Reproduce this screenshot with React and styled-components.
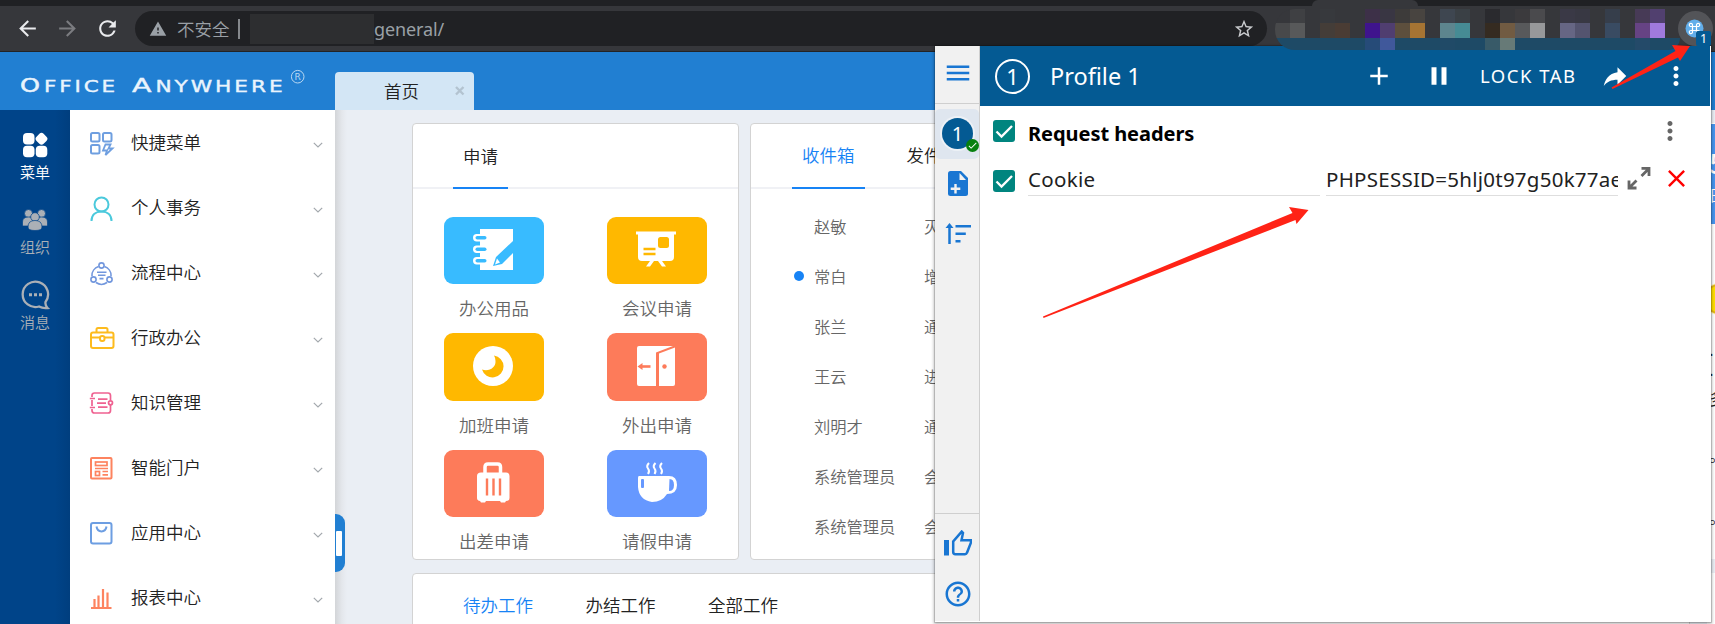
import React from "react";
import styled, { createGlobalStyle } from "styled-components";
import {
  MdArrowBack, MdArrowForward, MdRefresh, MdWarning, MdStarBorder, MdAdd, MdPause,
  MdMoreVert, MdHelpOutline, MdMenu, MdClose, MdCheck,
} from "react-icons/md";

const Global = createGlobalStyle`
  * { box-sizing: border-box; }
  body {
    margin: 0; overflow: hidden; background: #eaeef4;
    font-family: "Noto Sans", "Noto Sans CJK SC", sans-serif;
  }
  svg { display: block; flex: none; }
`;

const CJK = `"Noto Sans CJK SC", "Noto Sans", sans-serif`;

const Screen = styled.div`
  position: relative; width: 1715px; height: 624px; overflow: hidden;
  display: flex; flex-direction: column;
`;

/* ---------- browser chrome ---------- */
const TabStrip = styled.div`
  height: 6px; background: #202124; padding-left: 1312px; flex: none;
`;
const ActiveTab = styled.div`
  width: 106px; height: 6px; background: #36373b; border-radius: 7px 7px 0 0;
`;
const Toolbar = styled.div`
  height: 46px; flex: none; background: #36373b; border-bottom: 1px solid #222326;
  display: flex; align-items: center; padding-left: 15px;
`;
const NavButton = styled.div`
  width: 25px; height: 25px; margin-right: 15px; font-size: 25px; color: ${(p) => p.$color};
`;
const UrlBar = styled.div`
  width: 1132px; height: 35px; border-radius: 18px; background: #202124; color: #9aa0a6;
  display: flex; align-items: center; padding: 0 12px 0 14px; font-size: 17.5px; line-height: 24px;
  font-family: ${CJK}; font-weight: 350; overflow: hidden;
`;
const UrlNote = styled.span`margin-left: 10px; width: 54px; white-space: nowrap;`;
const UrlDivider = styled.span`width: 2px; height: 20px; background: #85888c; margin: 0 10px 0 7px;`;
const UrlMask = styled.span`width: 124px; height: 30px; background: #2d2e30;`;
const UrlPath = styled.span`
  font-family: "Noto Sans", sans-serif; font-size: 18px; letter-spacing: -0.1px; flex: 1; font-weight: 400;
`;
const Mosaic = styled.div`
  display: grid; grid-template-columns: repeat(27, 15px); grid-template-rows: 14px 15px 12px;
  border-radius: 20px 0 12px 20px; overflow: hidden;
  position: absolute; left: 1275px; top: 9px; z-index: 4;
`;
const Pixel = styled.i`background: ${(p) => p.$c};`;
const ExtensionButton = styled.div`
  position: absolute; left: 1678px; top: 11px; width: 35px; height: 35px; border-radius: 50%;
  background: #535458; z-index: 4; display: flex; align-items: center; justify-content: center;
  padding-right: 2px;
`;
const ExtensionBadge = styled.div`
  position: absolute; left: 18px; top: 20px; width: 15px; height: 15px; border-radius: 2px;
  background: #045a93; color: #fff; font-size: 12.5px; line-height: 15px; text-align: center;
`;

/* ---------- application header ---------- */
const AppHeader = styled.div`
  height: 58px; flex: none; background: #217fd2; display: flex; align-items: flex-end;
`;
const Brand = styled.div`width: 335px; height: 58px;`;
const PageTab = styled.div`
  width: 139px; height: 38px; background: #d3e6f5; border-radius: 4px 4px 0 0;
  display: flex; align-items: center; padding: 0 8px 0 49px; justify-content: space-between;
  font: 350 17.5px/24px ${CJK}; color: #222;
`;

const Body = styled.div`flex: 1; display: flex; min-height: 0;`;
const Rail = styled.div`
  width: 70px; padding-top: 18px;
  background: linear-gradient(90deg, #004489 0 55px, #003e7e 100%);
`;
const RailItem = styled.div`
  height: 75px; display: flex; flex-direction: column; align-items: center;
  color: ${(p) => (p.$active ? "#fff" : "#abb0b6")}; font: 350 15px/20px ${CJK};
`;
const RailIcon = styled.div`
  height: 34px; width: 72px; display: flex; align-items: center; justify-content: center;
`;

const Menu = styled.div`width: 265px; background: #fff; height: 514px; overflow: hidden;`;
const MenuRow = styled.div`
  height: 65px; display: flex; align-items: center; padding: 0 12px 1px 19px;
  font: 350 17.5px/26px ${CJK}; color: #222;
`;
const MenuIcon = styled.div`width: 26px; height: 26px; margin-top: 3px;`;
const MenuLabel = styled.span`margin-left: 16px; flex: 1;`;
const ChevronBox = styled.div`margin-top: 5px;`;

const Main = styled.div`
  flex: 1; min-width: 0; display: flex; padding: 13px 0 0 0;
  background: linear-gradient(90deg, #d3d5d8 0, #e4e7ec 7px, #eaeef4 12px);
`;
const DrawerHandle = styled.div`
  width: 10px; height: 58px; margin: 391px 67px 0 0; border-radius: 0 9px 9px 0; background: #217fd2;
  display: flex; align-items: center; padding-left: 1px;
  &::after { content: ""; width: 5.5px; height: 25px; border-radius: 1px; background: #fff; }
`;
const Board = styled.div`flex: 1; min-width: 0; display: flex; flex-direction: column; gap: 13px;`;
const BoardRow = styled.div`display: flex; gap: 11px;`;
const Card = styled.div`
  background: #fff; border: 1px solid #d3d3d3; border-radius: 4px; overflow: hidden;
  width: ${(p) => p.$w}px; height: ${(p) => p.$h}px; flex: none;
`;
const Tabs = styled.div`
  height: 65px; display: flex; padding-left: ${(p) => p.$left}px; border-bottom: 2px solid #f0f1f5;
  gap: ${(p) => p.$gap}px;
`;
const Tab = styled.div`
  height: 65px; padding: ${(p) => p.$top || 18}px 10px 0; white-space: nowrap;
  border-bottom: 2px solid ${(p) => (p.$line ? "#1783f5" : "transparent")};
  color: ${(p) => (p.$blue ? "#1783f5" : "#222")}; font: 350 17.5px/26px ${CJK};
`;
const Tiles = styled.div`
  display: grid; grid-template-columns: 100px 100px; column-gap: 63px; grid-auto-rows: 116.5px;
  padding: 27.5px 0 0 31px;
`;
const Tile = styled.div`
  display: flex; flex-direction: column; align-items: center; color: #666; font: 350 17.5px/26px ${CJK};
`;
const TileFace = styled.div`
  width: 100px; height: 67.5px; border-radius: 9px; margin-bottom: 11px; background: ${(p) => p.$c};
  display: flex; align-items: center; justify-content: center;
`;
const Mails = styled.div`padding: 12px 0 0 43px;`;
const MailRow = styled.div`
  height: 50.1px; display: flex; align-items: center; font: 350 16.25px/24px ${CJK}; color: #666; white-space: nowrap;
`;
const Unread = styled.i`
  width: 10px; height: 10px; border-radius: 50%; margin-right: 10px;
  background: ${(p) => (p.$on ? "#1783f5" : "transparent")};
`;
const MailFrom = styled.span`width: 110px; margin-top: -1px;`;
const MailSubject = styled.span`margin-top: -1px;`;

const SideColumn = styled.div`
  width: 8px; background: linear-gradient(#fff 0 436px, #eaeef4 436px 450px, #fff 450px);
  overflow: hidden; color: #222; font: 350 17px/20px ${CJK}; white-space: nowrap; flex: none;
`;
const Banner = styled.div`
  height: 100px; margin-top: 1px; background: #4795ef; color: #fff; padding: 20px 0 0 2px;
  font-size: 15px; line-height: 30px;
`;
const BannerCount = styled.div`font-size: 28px; font-weight: 500; line-height: 36px;`;
const Coin = styled.svg`margin-top: 56px;`;
const SideText = styled.div`margin-top: ${(p) => p.$top}px; padding-left: 2px;`;

/* ---------- extension popup ---------- */
const Popup = styled.div`
  position: absolute; left: 935px; top: 46px; width: 776px; height: 576px; background: #fff;
  display: flex; z-index: 3; box-shadow: 0 0 0 1px rgba(0,0,0,.12), 0 1px 3px 1px rgba(0,0,0,.3);
`;
const PopupRail = styled.div`
  width: 45px; height: 575px; background: #f1f1f1; border-right: 1px solid #cfcfcf; display: flex;
  flex-direction: column; align-items: center; color: #1976d2; font-size: 30px;
`;
const RailSlot = styled.div`
  width: 44px; height: ${(p) => p.$h}px; display: flex; align-items: center; justify-content: center;
  padding: ${(p) => p.$pad || "0"};
  border-bottom: ${(p) => (p.$line ? "1px solid #cfcfcf" : "0")};
`;
const ProfileSlot = styled.div`
  width: 44px; height: 50px; margin-top: 5px; border-radius: 5px; background: #dfe6ef;
  display: flex; align-items: center; justify-content: center; padding: 0 0 1px 1px;
`;
const ProfileDot = styled.div`
  position: relative; width: 31px; height: 31px; border-radius: 50%; background: #045a93; color: #fff;
  box-shadow: 0 0 0 2px #edf1f6; font-size: 20px; line-height: 31px; text-align: center;
`;
const OkBadge = styled.div`
  position: absolute; left: 24px; top: 21px; width: 13px; height: 13px; border-radius: 50%;
  background: #07800f; display: flex; align-items: center; justify-content: center; font-size: 11px;
`;
const RailFoot = styled.div`
  margin-top: auto; border-top: 1px solid #cfcfcf; width: 44px; height: 108px; padding: 4px 0 0 1px;
`;
const PopupMain = styled.div`flex: 1; display: flex; flex-direction: column; margin-right: 1px;`;
const PopupBar = styled.div`
  height: 60px; background: #045a93; color: #fff; display: flex; align-items: center;
  padding: 0 19px 0 15px; font-size: 30px;
`;
const ProfileRing = styled.div`
  width: 35px; height: 35px; border: 2px solid #fff; border-radius: 50%; font-size: 22px; line-height: 30px;
  text-align: center;
`;
const ProfileName = styled.div`
  margin-left: 20px; font-size: 23.5px; line-height: 32px; flex: 1;
`;
const LockTab = styled.div`font-size: 18.5px; letter-spacing: 1.5px; line-height: 30px; width: 120px; white-space: nowrap;`;
const BarIcon = styled.div`margin-right: ${(p) => p.$r}px;`;
const HeaderGroup = styled.div`
  height: 50px; display: flex; align-items: center; padding: 0 25px 0 13px; font-size: 30px;
`;
const CheckBox = styled.div`
  width: 22px; height: 22px; border-radius: 3px; background: #00857f; color: #fff;
  display: flex; align-items: center; justify-content: center; margin-right: 13px;
`;
const GroupTitle = styled.div`flex: 1; font-weight: 700; font-size: 20px; line-height: 28px; color: #000; padding-top: 5px; letter-spacing: -.05px;`;
const HeaderRow = styled.div`height: 50px; display: flex; align-items: center; padding-left: 13px;`;
const Field = styled.div`
  width: ${(p) => p.$w}px; height: 34px; border-bottom: 1px solid #dedede; overflow: hidden; white-space: nowrap;
  font-size: 20.5px; line-height: 35px; color: #212121; margin: -4px 6px 0 0; letter-spacing: ${(p) => p.$ls}px;
`;
const RowAction = styled.div`margin: -6px 0 0 ${(p) => p.$l}px; color: ${(p) => p.$c};`;

const Annotations = styled.svg`position: absolute; left: 0; top: 0; z-index: 6; pointer-events: none;`;

/* ---------- data ---------- */
const base = "#36373b";
const mosaicRows = [
  { 1: "#3f4043", 3: "#37393d", 6: "#3d3048", 7: "#393643", 8: "#3d3b3a", 9: "#484440", 11: "#3e4650", 12: "#3a4045", 14: "#2a2a2e", 16: "#3b3a3d", 17: "#4a4a4d", 19: "#3a3946", 20: "#383843", 22: "#363e4b", 24: "#473a56", 25: "#51406f" },
  { 0: "#48494b", 1: "#58595a", 3: "#443d38", 4: "#4a3c34", 6: "#3f148d", 7: "#503e70", 8: "#5d4f3d", 9: "#a67433", 11: "#5d858e", 12: "#468b94", 14: "#352b21", 15: "#715b42", 16: "#58595b", 17: "#97989a", 19: "#666684", 20: "#54546f", 22: "#394b62", 24: "#664384", 25: "#a07add" },
  { 6: "#264b78", 7: "#40589b", 11: "#204a67", 14: "#385a68", 15: "#677a77", 24: "#244a69" },
];
const fills = [base, base, "#1e4a66"];

const shortcuts = [
  ["快捷菜单", "grid"], ["个人事务", "person"], ["流程中心", "flow"], ["行政办公", "case"],
  ["知识管理", "book"], ["智能门户", "portal"], ["应用中心", "bag"], ["报表中心", "bars"],
];
const tiles = [
  ["办公用品", "#38bbff", "notebook"], ["会议申请", "#ffb800", "board"],
  ["加班申请", "#ffb800", "moon"], ["外出申请", "#fd7b5a", "door"],
  ["出差申请", "#fd7b5a", "luggage"], ["请假申请", "#6698ff", "cup"],
];
const mails = [
  ["赵敏", "灭火"], ["常白", "增加", true], ["张兰", "通知"], ["王云", "进度"],
  ["刘明才", "通知"], ["系统管理员", "会议"], ["系统管理员", "会议"],
];

/* ---------- drawings ---------- */
const menuDrawings = {
  grid: (
    <g stroke="#6f9fe0">
      <rect x="2" y="2" width="8.5" height="8.5" rx="1.5" /><rect x="14" y="2" width="8.5" height="8.5" rx="1.5" />
      <rect x="2" y="14" width="8.5" height="8.5" rx="1.5" />
      <path d="M16.5 13.5h5l-2 4h4l-7 6.5 1.5-4.500h-4z" strokeWidth="1.800" />
    </g>
  ),
  person: <g stroke="#4bc9dc"><circle cx="12.5" cy="8.500" r="7" /><path d="M2.500 25c0-6.500 4.500-9.500 10-9.500s10 3 10 9.500" /></g>,
  flow: (
    <g stroke="#7297dd" strokeWidth="1.600">
      <circle cx="12.5" cy="4.500" r="2.600" /><circle cx="4.500" cy="18.500" r="2.600" /><circle cx="20.500" cy="18.500" r="2.600" />
      <path d="M9.500 5.500a9.500 9.500 0 0 0-6.500 9.500M15.500 5.500a9.500 9.500 0 0 1 6.500 9.500M7 21.500a9.500 9.500 0 0 0 11 0M8 11.200h9.500M9 14.200h7.500M10.500 17.600h4" />
    </g>
  ),
  case: (
    <g stroke="#fdbb1e">
      <path d="M7.500 6.500V3.500q0-1.500 1.500-1.500h8q1.500 0 1.500 1.500v3" /><rect x="2" y="6.500" width="22.500" height="15.500" rx="2" />
      <path d="M2 11.500h9M16 11.500h8.500" /><rect x="11" y="10" width="4.500" height="5" rx="2" />
    </g>
  ),
  book: (
    <g stroke="#ef6291" strokeWidth="1.700">
      <path d="M3 6V4.500Q3 2 5.500 2H19q2.500 0 2.500 2.500v5M21.500 13.500v6q0 2.500-2.500 2.500H5.500Q3 22 3 19.500V18M3 9v6M.8 7.500H6M.8 16.500H6M9 8.200h9.500M8 12.200h9M9 16.200h9.500" />
      <circle cx="21.500" cy="11.800" r="2" />
    </g>
  ),
  portal: (
    <g stroke="#fd835f">
      <rect x="2" y="2" width="20.500" height="20.500" rx="1" /><rect x="6.500" y="6" width="11.500" height="3.500" strokeWidth="1.700" />
      <path d="M6 12.500h13M13.500 15.500H19M13.500 18.800H19" strokeWidth="1.700" /><rect x="6.500" y="15.500" width="4" height="4" strokeWidth="1.700" />
    </g>
  ),
  bag: <g stroke="#6d9ee2"><rect x="2" y="2" width="20.500" height="20.500" rx="2" /><path d="M7.500 5.500c1 6.500 9 6.500 10 0" /></g>,
  bars: <g stroke="#fd835f"><path d="M2 22h20.500M5.500 21v-8M9.500 21V9.500M14 21V3M18.500 21V6.500" strokeWidth="2.200" /></g>,
};

const tileDrawings = {
  notebook: (
    <>
      <path d="M7 0h33v12L23 28l-3 9 9-2 11-11v17H7z" fill="#fff" />
      <path d="M24 29.500l3 4-5 2z" fill="#fff" />
      {[8.5, 20, 31.5].map((y) => (
        <g key={y}><rect x="0" y={y - 3.5} width="14" height="7.500" rx="3.700" fill="#fff" /><rect x="2.500" y={y - 1.500} width="11" height="3.600" rx="1.800" fill="#38bbff" /></g>
      ))}
    </>
  ),
  board: (
    <>
      <path d="M0 2.500h40v3h-2V28q0 4-4 4h-8l4 5.500h-4L22 32h-4l-4 5.500h-4L14 32H6q-4 0-4-4V5.500H0z" fill="#fff" />
      <rect x="22" y="8" width="11" height="11" rx="2.500" fill="#ffb800" />
      <path d="M7.500 20h12M7.500 25h12" stroke="#ffb800" strokeWidth="2.600" />
    </>
  ),
  moon: (
    <>
      <circle cx="20" cy="20" r="20" fill="#fff" />
      <path d="M21 9.500a11 11 0 1 1-12 14c7 2.500 14-2 13.500-8.500q0-3-1.500-5.500z" fill="#ffb800" />
    </>
  ),
  door: (
    <>
      <path d="M1 2q0-2 2-2h34L20 6.500V40H3q-2 0-2-2z" fill="#fff" />
      <path d="M23 7.500l16-6V38q0 2-2 2H23z" fill="#fff" />
      <circle cx="28.500" cy="20.500" r="2.200" fill="#fd7b5a" />
      <path d="M14.500 20.500H5" stroke="#fd7b5a" strokeWidth="2.600" /><path d="M1.500 20.500l5-3.500v7z" fill="#fd7b5a" />
    </>
  ),
  luggage: (
    <>
      <path d="M12 11V5q0-3 3-3h9.500q3 0 3 3v6" stroke="#fff" strokeWidth="3.500" fill="none" />
      <path d="M8 10.500h25q3.500 0 3.500 3.500v22q0 3-3.500 3l-1 1.500h-4L27 39H13l-1 1.500H8L7 39q-3-.5-3-3V14q0-3.500 4-3.500z" fill="#fff" />
      <path d="M14 16.500v17M20.500 16.500v17M27 16.500v17" stroke="#fd7b5a" strokeWidth="2.400" />
    </>
  ),
  cup: (
    <>
      <path d="M3 14h30q8 0 8 9t-10 9q-5 8-15 8Q3 38 2 25V16q0-2 1-2z" fill="#fff" />
      <path d="M33.500 17q4.500 0 4.500 6t-5 6z" fill="#6698ff" /><rect x="5" y="17" width="3" height="9" rx="1" fill="#6698ff" />
      <path d="M13 1q-3 3-1 5.500T12 12M19.500 1q-3 3-1 5.500T18.500 12M26 1q-3 3-1 5.500T25 12" stroke="#fff" strokeWidth="2" fill="none" />
    </>
  ),
};

const Chevron = () => (
  <svg width="10" height="6" fill="none" stroke="#a3a8ad" strokeWidth="1.200"><path d="M.8.8 5 5 9.200.8" /></svg>
);

const Check = () => (
  <svg width="20" height="20" viewBox="0 0 20 20" fill="none" stroke="#fff" strokeWidth="2.300"><path d="M2.500 10.500l5 5L18 5" /></svg>
);

function Logo() {
  const small = { fontSize: 15, y: 39.5, letterSpacing: 2, lengthAdjust: "spacingAndGlyphs", stroke: "#eaf4fd", strokeWidth: 0.35 };
  return (
    <svg width="335" height="58" fill="#eaf4fd" fontFamily="DejaVu Sans">
      <text x="20" y="39.500" fontSize="19" textLength="20" lengthAdjust="spacingAndGlyphs" stroke="#eaf4fd" strokeWidth=".5">O</text>
      <text x="44" {...small} textLength="74">FFICE</text>
      <text x="132" y="39.500" fontSize="19" textLength="19.500" lengthAdjust="spacingAndGlyphs" stroke="#eaf4fd" strokeWidth=".4">A</text>
      <text x="155.500" {...small} textLength="130">NYWHERE</text>
      <circle cx="297.700" cy="24.700" r="6.300" fill="none" stroke="#b9d8f2" />
      <text x="294.500" y="28.200" fontSize="9" fill="#b9d8f2">R</text>
    </svg>
  );
}

export default function App() {
  return (
    <Screen>
      <Global />
      <TabStrip><ActiveTab /></TabStrip>
      <Toolbar>
        <NavButton $color="#e9eaed"><MdArrowBack /></NavButton>
        <NavButton $color="#7b7c80"><MdArrowForward /></NavButton>
        <NavButton $color="#e9eaed"><MdRefresh /></NavButton>
        <UrlBar>
          <MdWarning size={18} />
          <UrlNote>不安全</UrlNote><UrlDivider /><UrlMask />
          <UrlPath>general/</UrlPath>
          <MdStarBorder size={22} color="#c8cacd" />
        </UrlBar>
      </Toolbar>
      <Mosaic>
        {mosaicRows.map((row, r) => Array.from({ length: 27 }, (_, c) => <Pixel key={`${r}-${c}`} $c={row[c] || fills[r]} />))}
      </Mosaic>
      <ExtensionButton>
        <svg width="19" height="19" viewBox="0 0 19 19">
          <circle cx="9.500" cy="9.500" r="9" fill="#62aeea" />
          <path d="M7.500 7.500h4v4h-4zM7.500 7.500H6a1.600 1.600 0 1 1 1.500-1.500zM11.500 7.500V6A1.600 1.600 0 1 1 13 7.500zM11.500 11.500H13a1.600 1.600 0 1 1-1.500 1.500zM7.500 11.500V13A1.600 1.600 0 1 1 6 11.500z" fill="none" stroke="#fff" strokeWidth="1.200" />
        </svg>
        <ExtensionBadge>1</ExtensionBadge>
      </ExtensionButton>

      <AppHeader>
        <Brand><Logo /></Brand>
        <PageTab>
          首页
          <svg width="12" height="12" stroke="#b3c3d0" strokeWidth="2.400"><path d="M2 2l7.500 7.500M9.500 2L2 9.500" /></svg>
        </PageTab>
      </AppHeader>

      <Body>
        <Rail>
          <RailItem $active>
            <RailIcon>
              <svg width="26" height="26" fill="#fff">
                <rect x="1" y="1" width="11.500" height="11.500" rx="4" /><rect x="1" y="13.800" width="11.500" height="11.500" rx="4" />
                <rect x="13.800" y="13.800" width="11.500" height="11.500" rx="4" /><rect x="14.500" y="1.800" width="10" height="10" rx="3" transform="rotate(45 19.500 6.800)" />
              </svg>
            </RailIcon>
            菜单
          </RailItem>
          <RailItem>
            <RailIcon>
              <svg width="26" height="22" fill="#abb0b6" stroke="#004489" strokeWidth=".7">
                <circle cx="6.500" cy="4.500" r="4" /><circle cx="19.500" cy="4.500" r="4" />
                <path d="M.5 17V13q0-5 6-5t6 5v4zM13.500 17V13q0-5 6-5t6 5v4z" />
                <circle cx="13" cy="8" r="4.300" /><path d="M6 18q0-6.500 7-6.500t7 6.500q0 3.500-7 3.500T6 18z" />
              </svg>
            </RailIcon>
            组织
          </RailItem>
          <RailItem>
            <RailIcon>
              <svg width="30" height="30" fill="none" stroke="#abb0b6" strokeWidth="2.300">
                <path d="M27.500 28q-5 .5-8.500-1.500A12.700 12.700 0 1 1 25.500 22q-.5 3.500 2 6z" />
                <path d="M9 14.700h3M14 14.700h3M19 14.700h3" strokeWidth="3" />
              </svg>
            </RailIcon>
            消息
          </RailItem>
        </Rail>

        <Menu>
          {shortcuts.map(([label, kind]) => (
            <MenuRow key={label}>
              <MenuIcon><svg width="26" height="26" fill="none" strokeWidth="2">{menuDrawings[kind]}</svg></MenuIcon>
              <MenuLabel>{label}</MenuLabel>
              <ChevronBox><Chevron /></ChevronBox>
            </MenuRow>
          ))}
        </Menu>

        <Main>
          <DrawerHandle />
          <Board>
            <BoardRow>
              <Card $w={327} $h={437}>
                <Tabs $left={40} $gap={0}><Tab $line $top={19}>申请</Tab></Tabs>
                <Tiles>
                  {tiles.map(([label, color, kind]) => (
                    <Tile key={label}>
                      <TileFace $c={color}><svg width="42" height="42">{tileDrawings[kind]}</svg></TileFace>
                      {label}
                    </Tile>
                  ))}
                </Tiles>
              </Card>
              <Card $w={940} $h={437}>
                <Tabs $left={41} $gap={32}><Tab $line $blue>收件箱</Tab><Tab>发件箱</Tab></Tabs>
                <Mails>
                  {mails.map(([from, subject, unread], i) => (
                    <MailRow key={i}><Unread $on={unread} /><MailFrom>{from}</MailFrom><MailSubject>{subject}</MailSubject></MailRow>
                  ))}
                </Mails>
              </Card>
            </BoardRow>
            <Card $w={1278} $h={80}>
              <Tabs $left={40} $gap={32.5}><Tab $blue>待办工作</Tab><Tab>办结工作</Tab><Tab>全部工作</Tab></Tabs>
            </Card>
          </Board>
          <SideColumn>
            <Banner><BannerCount>5</BannerCount>日</Banner>
            <Coin width="8" height="40"><circle cx="12" cy="19" r="16" fill="#fff3b0" /><circle cx="12" cy="19" r="14" fill="#ffdf00" stroke="#e2b515" strokeWidth="2" /></Coin>
            <SideText $top={19}>.<br />.</SideText>
            <SideText $top={9}>多</SideText>
            <SideText $top={37}>。</SideText>
            <SideText $top={42}>。</SideText>
          </SideColumn>
        </Main>
      </Body>

      <Popup>
        <PopupRail>
          <RailSlot $h={58} $line $pad="0 0 4px 1px"><MdMenu /></RailSlot>
          <ProfileSlot>
            <ProfileDot>1<OkBadge><MdCheck /></OkBadge></ProfileDot>
          </ProfileSlot>
          <RailSlot $h={49} $pad="0 0 0 1px">
            <svg width="20" height="25" viewBox="0 0 20 25" fill="#1976d2">
              <path d="M2.500 0H13l7 7v15.500q0 2.500-2.500 2.500h-15Q0 25 0 22.500v-20Q0 0 2.500 0z" /><path d="M11.500 2v7h6.500z" fill="#f1f1f1" />
              <path d="M7.500 13v9.500M2.700 17.800h9.600" stroke="#f1f1f1" strokeWidth="2.400" />
            </svg>
          </RailSlot>
          <RailSlot $h={50} $pad="1px 0 0 1px">
            <svg width="26" height="21" fill="none" stroke="#1976d2" strokeWidth="2.500">
              <path d="M4.500 21V3M10.500 3.200H26M10.500 10.700h10.300M10.500 18.200h5" /><path d="M4.500 0l4 5h-8z" fill="#1976d2" stroke="none" />
            </svg>
          </RailSlot>
          <RailFoot>
            <RailSlot $h={50}>
              <svg width="28" height="26" viewBox="0 0 28 26" fill="none" stroke="#1976d2" strokeWidth="2.500">
                <path d="M0 10h5v15.500H0z" fill="#1976d2" stroke="none" />
                <path d="M9.200 11.500v10.500q0 2.200 2.200 2.200H21q1.500 0 2-1.500l4-10.200V10.200H17.500L19 3l-1.300-1.400z" />
              </svg>
            </RailSlot>
            <RailSlot $h={52}><MdHelpOutline /></RailSlot>
          </RailFoot>
        </PopupRail>
        <PopupMain>
          <PopupBar>
            <ProfileRing>1</ProfileRing>
            <ProfileName>Profile 1</ProfileName>
            <BarIcon $r={30}><MdAdd /></BarIcon>
            <BarIcon $r={26}><MdPause /></BarIcon>
            <LockTab>LOCK TAB</LockTab>
            <BarIcon $r={31}>
              <svg width="30" height="30" viewBox="0 0 24 24" fill="#fff"><path d="M14 9V5l7 7-7 7v-4.100c-5 0-8.500 1.600-11 5.100 1-5 4-10 11-11z" /></svg>
            </BarIcon>
            <MdMoreVert />
          </PopupBar>
          <HeaderGroup>
            <CheckBox><Check /></CheckBox>
            <GroupTitle>Request headers</GroupTitle>
            <MdMoreVert color="#666" />
          </HeaderGroup>
          <HeaderRow>
            <CheckBox><Check /></CheckBox>
            <Field $w={292} $ls={0.3}>Cookie</Field>
            <Field $w={292} $ls={0.25}>PHPSESSID=5hlj0t97g50k77ae</Field>
            <RowAction $l={3} $c="#666">
              <svg width="24" height="24" fill="none" stroke="#666" strokeWidth="2.800">
                <path d="M14.500 2.400h7.500v7.500M21.500 2.900l-7 7M2 14.500v7.500h7.500M2.500 21.500l7-7" />
              </svg>
            </RowAction>
            <RowAction $l={11} $c="#f00"><MdClose size={29} /></RowAction>
          </HeaderRow>
        </PopupMain>
      </Popup>

      <Annotations width="1715" height="624" fill="#ff2316">
        <path d="M1043 316.500 L1292.500 213 L1289 207 L1308.500 210 L1296.500 224 L1295.500 220 L1043.500 318 Z" />
        <path d="M1611.500 87.500 L1675.500 51 L1672 45 L1690 46 L1680 61 L1678 57.500 L1612.500 89 Z" />
      </Annotations>
    </Screen>
  );
}
